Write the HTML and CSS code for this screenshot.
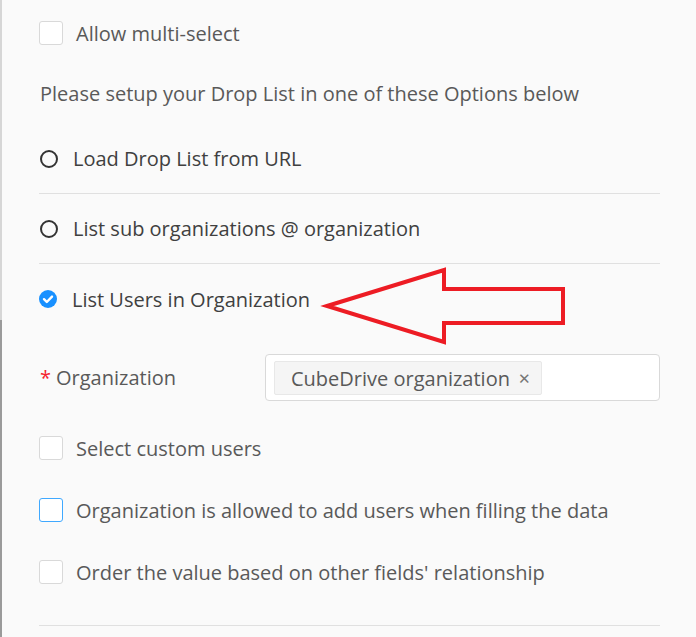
FILE: index.html
```html
<!DOCTYPE html>
<html lang="en">
<head>
    <meta charset="UTF-8">
    <title>Drop List Options</title>
    <link rel="stylesheet" href="styles.css">
</head>
<body>
    <div class="page">
        <div class="edge">
            <div class="edge-top"></div>
            <div class="edge-bottom"></div>
        </div>
        <div class="content">
            <label class="check-row first">
                <span class="box"></span>
                <span>Allow multi-select</span>
            </label>

            <p class="intro">Please setup your Drop List in one of these Options below</p>

            <div class="radio-list">
                <label class="radio-row">
                    <span class="radio"></span>
                    <span>Load Drop List from URL</span>
                </label>
                <label class="radio-row">
                    <span class="radio"></span>
                    <span>List sub organizations @ organization</span>
                </label>
                <label class="radio-row last">
                    <svg class="radio-checked" width="18" height="18" viewBox="0 0 18 18">
                        <circle cx="9" cy="9" r="9" fill="#1890ff"/>
                        <path d="M5 9.2 L7.8 12 L13 6.6" fill="none" stroke="#fff" stroke-width="2.4" stroke-linecap="round" stroke-linejoin="round"/>
                    </svg>
                    <span>List Users in Organization</span>
                </label>
            </div>

            <div class="org-row">
                <div class="org-label"><span class="req">*</span>Organization</div>
                <div class="select">
                    <span class="tag">CubeDrive organization <span class="tag-close">&#x2715;</span></span>
                </div>
            </div>

            <label class="check-row">
                <span class="box"></span>
                <span>Select custom users</span>
            </label>
            <label class="check-row">
                <span class="box focus"></span>
                <span>Organization is allowed to add users when filling the data</span>
            </label>
            <label class="check-row">
                <span class="box"></span>
                <span>Order the value based on other fields' relationship</span>
            </label>

            <div class="divider"></div>
        </div>

        <!-- annotation arrow -->
        <svg class="arrow" width="250" height="80" viewBox="320 265 250 80">
            <polygon points="327,306 444,270 444,289 563,289 563,323 444,323 444,342" fill="none" stroke="#ed1c24" stroke-width="4" stroke-linejoin="miter"/>
        </svg>
    </div>
</body>
</html>
```

FILE: styles.css
```css
body {
    margin: 0;
    padding: 0;
    background-color: #fafafa;
    font-family: "Open Sans", "Liberation Sans", sans-serif;
    font-size: 20px;
    color: #595959;
}
.page {
    display: flex;
    height: 637px;
    position: relative;
    overflow: hidden;
}
.edge {
    width: 2px;
    display: flex;
    flex-direction: column;
}
.edge-top {
    height: 320px;
    background-color: #d6d6d6;
}
.edge-bottom {
    flex: 1;
    background-color: #9a9a9a;
}
.content {
    flex: 1;
    padding: 0 36px 0 37px;
}
.check-row {
    display: flex;
    align-items: center;
    gap: 13px;
    height: 62px;
}
.check-row.first {
    height: 46px;
    margin-top: 10px;
}
.box {
    width: 22px;
    height: 22px;
    border: 1px solid #d9d9d9;
    border-radius: 3px;
    background-color: #fff;
    flex-shrink: 0;
}
.box.focus {
    border-color: #40a9ff;
}
.intro {
    margin: 20px 0 12px 1px;
    line-height: 36px;
}
.radio-row {
    display: flex;
    align-items: center;
    gap: 15px;
    height: 69px;
    border-bottom: 1px solid #e0e0e0;
    color: #404040;
}
.radio-row.last {
    border-bottom: none;
    height: 70px;
}
.radio {
    width: 14px;
    height: 14px;
    border: 2px solid #333;
    border-radius: 50%;
    margin-left: 1px;
    flex-shrink: 0;
}
.radio-checked {
    flex-shrink: 0;
}
.org-row {
    display: flex;
    align-items: center;
    margin-top: 20px;
    margin-bottom: 16px;
}
.org-label {
    width: 225px;
    padding-left: 1px;
}
.req {
    color: #f5222d;
    margin-right: 5px;
}
.select {
    flex: 1;
    height: 45px;
    border: 1px solid #d9d9d9;
    border-radius: 4px;
    background-color: #fff;
    display: flex;
    align-items: center;
    padding-left: 8px;
}
.tag {
    height: 32px;
    line-height: 32px;
    padding: 0 10px 0 16px;
    background-color: #f5f5f5;
    border: 1px solid #e8e8e8;
    border-radius: 2px;
    color: #595959;
}
.tag-close {
    font-size: 15px;
    color: #777;
    margin-left: 3px;
    vertical-align: 2px;
}
.divider {
    height: 1px;
    background-color: #e0e0e0;
    margin-top: 22px;
}
.arrow {
    position: absolute;
    left: 320px;
    top: 265px;
}
```
